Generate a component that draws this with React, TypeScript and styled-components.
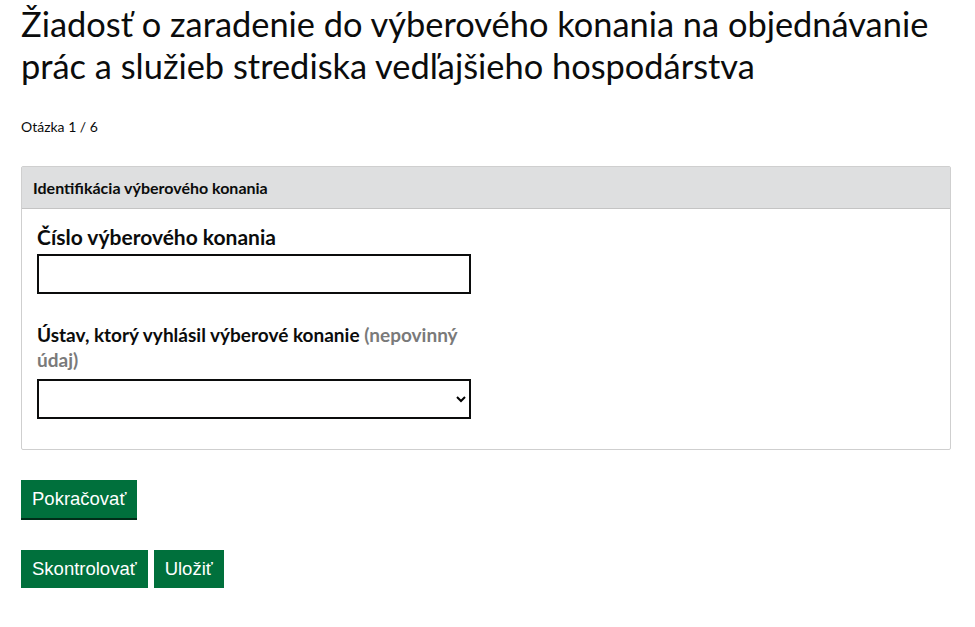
import React from "react";
import styled, { createGlobalStyle } from "styled-components";

const Global = createGlobalStyle`
  html, body { margin: 0; padding: 0; background: #fff; }
  body { font-family: "Lato", "Noto Sans", sans-serif; color: #0b0c0c; }
  * { box-sizing: border-box; }
`;

const Page = styled.main`
  padding: 0 0 0 21px;
  width: 975px;
`;

const Title = styled.h1`
  margin: 0;
  padding-top: 3px;
  width: 945px;
  font-family: "Lato", sans-serif;
  font-weight: 400;
  font-size: 34.4px;
  line-height: 42px;
  color: #0b0c0c;
`;

const Progress = styled.p`
  margin: 30px 0 0;
  font-size: 14px;
  line-height: 20px;
`;

const Panel = styled.section`
  margin-top: 29px;
  width: 930px;
  border: 1px solid #cfcfcf;
  border-radius: 2px;
`;

const PanelHeader = styled.div`
  background: #dedfe0;
  border-bottom: 1px solid #c4c4c4;
  height: 42px;
  display: flex;
  align-items: center;
  padding: 0 11px;
  font-size: 16px;
  font-weight: 700;
`;

const PanelBody = styled.div`
  padding: 15px 15px 30px;
  display: flex;
  flex-direction: column;
  gap: 28px;
`;

const Field = styled.div`
  display: flex;
  flex-direction: column;
  width: 434px;
`;

const Label = styled.label<{ $size: number; $gap: number }>`
  font-size: ${(p) => p.$size}px;
  font-weight: 700;
  line-height: 25px;
  margin-bottom: ${(p) => p.$gap}px;
`;

const Optional = styled.span`
  color: #7a7a7a;
`;

const TextInput = styled.input`
  height: 40px;
  width: 434px;
  border: 2px solid #0b0c0c;
  border-radius: 0;
  font-size: 17px;
  padding: 4px 6px;
  outline: none;
`;

const Select = styled.select`
  height: 40px;
  width: 434px;
  border: 2px solid #0b0c0c;
  border-radius: 0;
  background: #fff;
  font-size: 17px;
  padding: 4px 6px;
  outline: none;
`;

const ButtonRow = styled.div<{ $top: number }>`
  display: flex;
  gap: 6px;
  margin-top: ${(p) => p.$top}px;
`;

const Button = styled.button`
  font-family: "Liberation Sans", Arial, sans-serif;
  font-size: 18.5px;
  line-height: 20px;
  color: #fff;
  background: #00703c;
  border: none;
  border-radius: 0;
  box-shadow: 0 2px 0 #002d18;
  padding: 9px 11px;
  height: 38px;
  cursor: pointer;
`;

export default function App() {
  return (
    <>
      <Global />
      <Page>
        <Title>
          Žiadosť o zaradenie do výberového konania na objednávanie prác a služieb strediska vedľajšieho hospodárstva
        </Title>
        <Progress>Otázka 1 / 6</Progress>
        <Panel>
          <PanelHeader>Identifikácia výberového konania</PanelHeader>
          <PanelBody>
            <Field>
              <Label $size={21} $gap={5} htmlFor="cislo">Číslo výberového konania</Label>
              <TextInput id="cislo" type="text" />
            </Field>
            <Field>
              <Label $size={19} $gap={7} htmlFor="ustav">
                Ústav, ktorý vyhlásil výberové konanie <Optional>(nepovinný údaj)</Optional>
              </Label>
              <Select id="ustav">
                <option value=""></option>
              </Select>
            </Field>
          </PanelBody>
        </Panel>
        <ButtonRow $top={30}>
          <Button>Pokračovať</Button>
        </ButtonRow>
        <ButtonRow $top={32}>
          <Button>Skontrolovať</Button>
          <Button>Uložiť</Button>
        </ButtonRow>
      </Page>
    </>
  );
}
